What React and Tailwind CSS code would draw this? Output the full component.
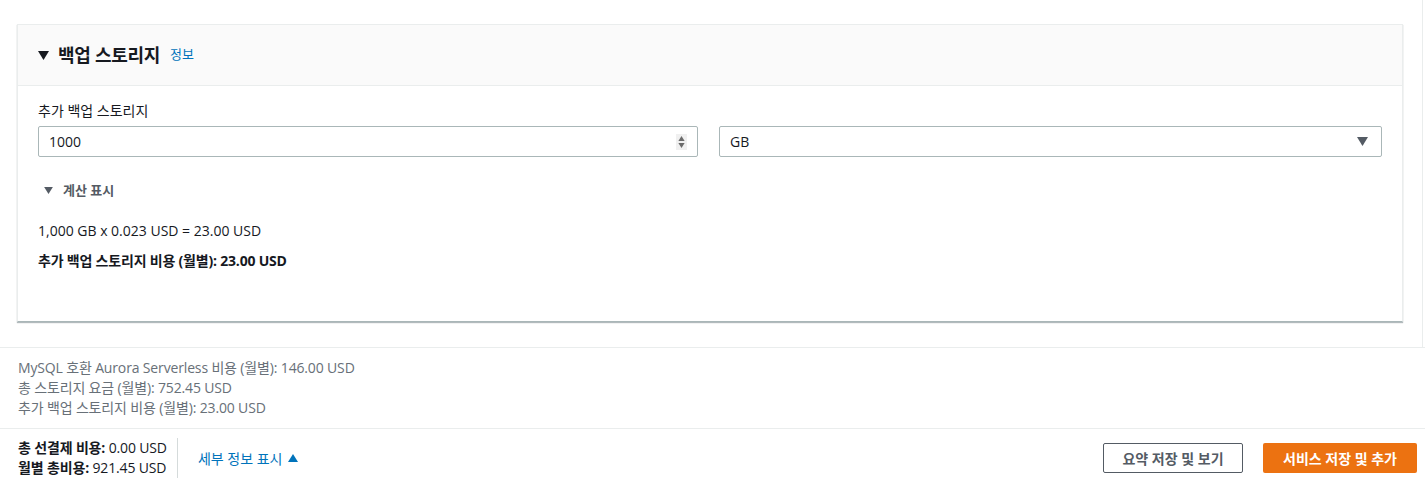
import React from 'react';

const font = { fontFamily: '"Open Sans", "Noto Sans CJK KR", sans-serif' };

const Caret = ({ className = '', up = false }) => (
    <svg viewBox="0 0 10 8" className={className} fill="currentColor">
        {up ? <polygon points="0,8 10,8 5,0" /> : <polygon points="0,0 10,0 5,8" />}
    </svg>
);

export default function App() {
    return (
        <div className="w-[1425px] h-[487px] bg-white text-[#16191f] overflow-hidden" style={font}>
            <div className="w-[1423px] border-r border-[#eaeded] pt-[24px] pl-[17px] pr-[19px] pb-[25px]">
                <div className="border border-[#eaeded] border-b-[#aab7b8] shadow-[0_1px_1px_0_rgba(0,28,36,0.3)] bg-white">
                    <div className="h-[61px] bg-[#fafafa] border-b border-[#eaeded] flex items-center pl-[20px]">
                        <Caret className="w-[11px] h-[9px] text-[#16191f] mr-[9px]" />
                        <span className="text-[18px] font-bold leading-[24px] tracking-[-0.3px]">백업 스토리지</span>
                        <span className="ml-[10px] text-[13px] text-[#0073bb]">정보</span>
                    </div>
                    <div className="px-[20px] pt-[15px] pb-[50px]">
                        <div className="text-[14px] leading-[20px]">추가 백업 스토리지</div>
                        <div className="mt-[5px] flex gap-[21px]">
                            <div className="flex-1 h-[31px] border border-[#aab7b8] rounded-[2px] flex items-center pl-[10px] pr-[10px]">
                                <span className="flex-1 text-[14px]">1000</span>
                                <div className="w-[11px] h-[16px] bg-[#f0f0f0] flex flex-col items-center justify-center gap-[2px]">
                                    <Caret up className="w-[7px] h-[5px] text-[#6b6b6b]" />
                                    <Caret className="w-[7px] h-[5px] text-[#6b6b6b]" />
                                </div>
                            </div>
                            <div className="flex-1 h-[31px] border border-[#aab7b8] rounded-[2px] flex items-center pl-[10px] pr-[13px]">
                                <span className="flex-1 text-[14px]">GB</span>
                                <Caret className="w-[11px] h-[9px] text-[#545b64]" />
                            </div>
                        </div>
                        <div className="mt-[23px] flex items-center pl-[6px] text-[13px] font-semibold text-[#545b64] leading-[20px]">
                            <Caret className="w-[9px] h-[7px] mr-[10px]" />
                            계산 표시
                        </div>
                        <div className="mt-[21px] text-[14px] leading-[20px]">1,000 GB x 0.023 USD = 23.00 USD</div>
                        <div className="mt-[10px] text-[14px] leading-[20px] font-bold tracking-[-0.2px]">추가 백업 스토리지 비용 (월별): 23.00 USD</div>
                    </div>
                </div>
            </div>
            <div className="border-t border-[#eaeded] px-[18px] pt-[10px] pb-[10px] text-[14px] leading-[20px] text-[#687078] tracking-[-0.15px]">
                <div>MySQL 호환 Aurora Serverless 비용 (월별): 146.00 USD</div>
                <div>총 스토리지 요금 (월별): 752.45 USD</div>
                <div>추가 백업 스토리지 비용 (월별): 23.00 USD</div>
            </div>
            <div className="border-t border-[#eaeded] h-[59px] flex items-center pl-[18px] pr-[8px]">
                <div className="text-[14px] leading-[20px] pr-[10px] border-r border-[#d5dbdb] tracking-[-0.15px]">
                    <div><span className="font-bold">총 선결제 비용:</span> 0.00 USD</div>
                    <div><span className="font-bold">월별 총비용:</span> 921.45 USD</div>
                </div>
                <div className="ml-[20px] flex items-center text-[14px] text-[#0073bb]">
                    세부 정보 표시
                    <Caret up className="w-[10px] h-[8px] ml-[6px]" />
                </div>
                <div className="flex-1" />
                <button className="h-[30px] w-[140px] border border-[#545b64] rounded-[2px] text-[14px] font-bold text-[#545b64] bg-white">
                    요약 저장 및 보기
                </button>
                <button className="ml-[20px] h-[30px] w-[154px] rounded-[2px] text-[14px] font-bold text-white bg-[#ec7211]">
                    서비스 저장 및 추가
                </button>
            </div>
        </div>
    );
}
